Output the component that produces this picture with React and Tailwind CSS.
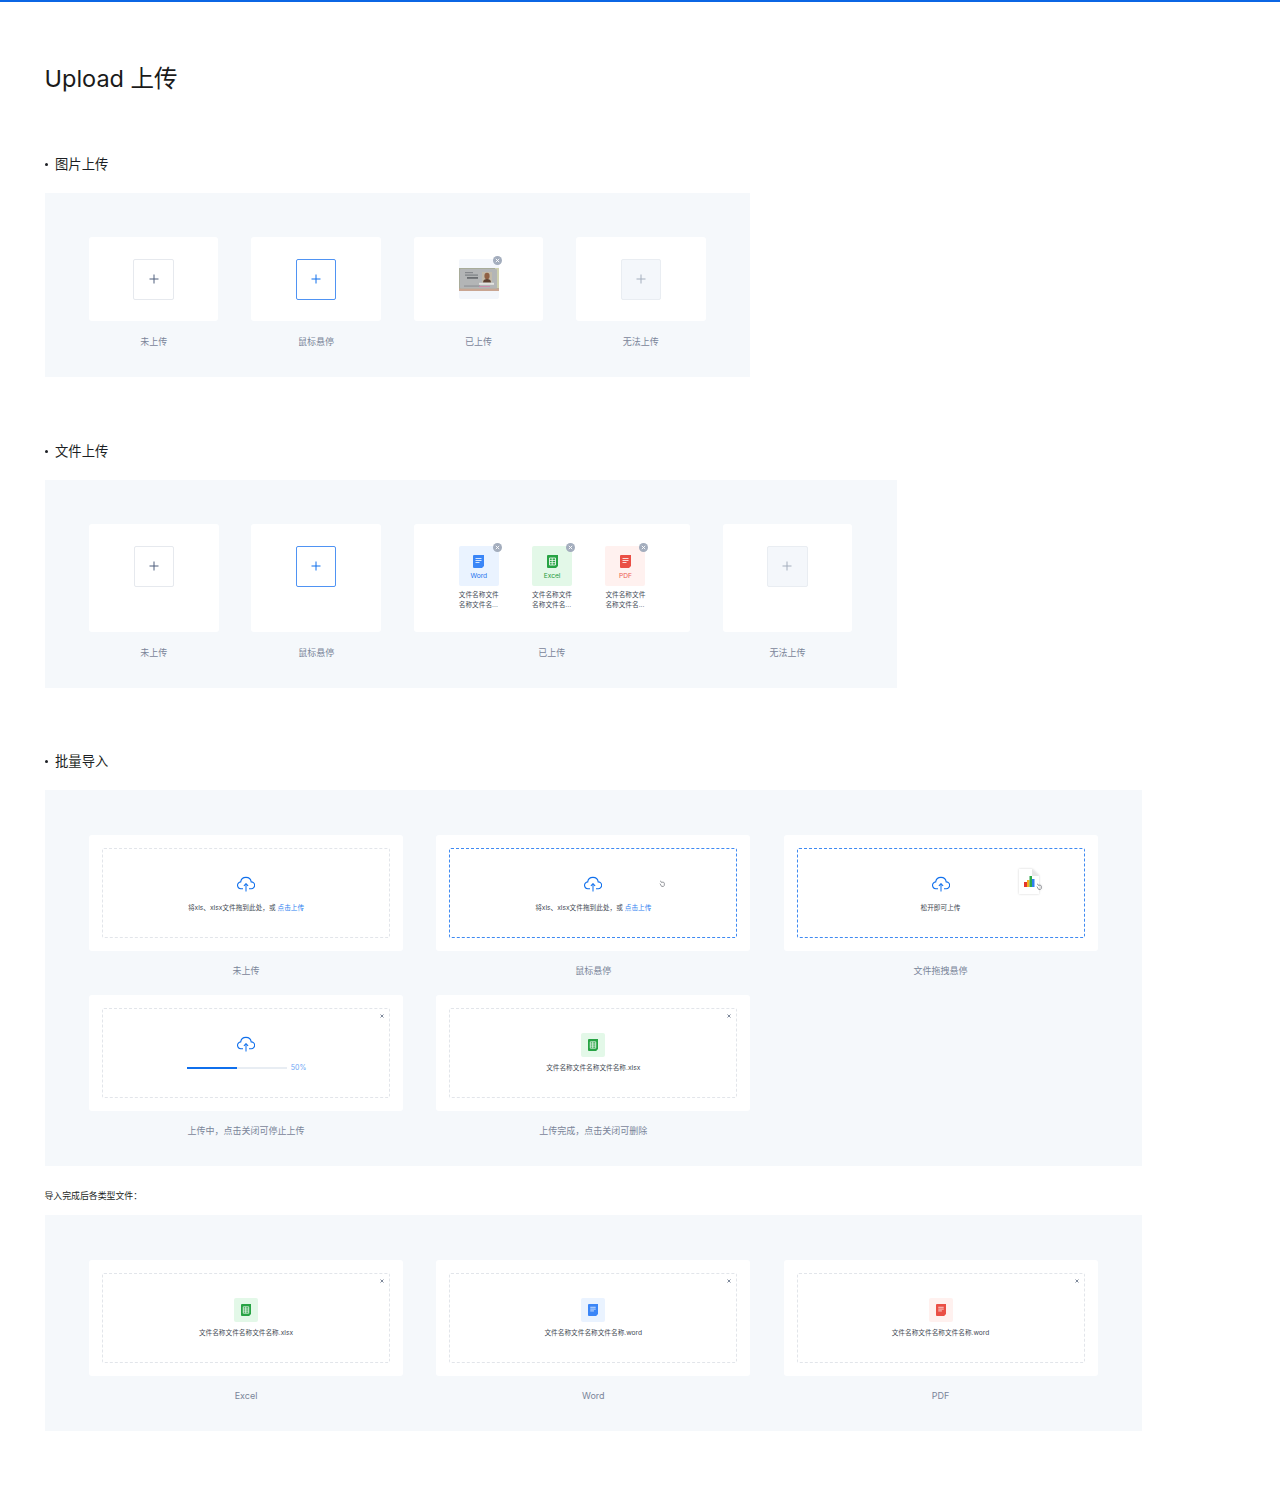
import React from "react";

const tone = {
  word: { tile: "bg-[#eaf3ff]", text: "text-[#1f74ee]", fill: "#3b86f7", name: "Word" },
  excel: { tile: "bg-[#e3f8e8]", text: "text-[#1f9a3c]", fill: "#27a344", name: "Excel" },
  pdf: { tile: "bg-[#fff1ef]", text: "text-[#ec5a50]", fill: "#ea4f45", name: "PDF" },
};

function Plus({ color = "#4f5f7d", size = 10 }) {
  return (
    <svg width={size} height={size} viewBox="0 0 10 10" fill="none" stroke={color} strokeWidth="1">
      <path d="M5 .5v9M.5 5h9" />
    </svg>
  );
}

function UploadTile({ state }) {
  const cls =
    state === "hover"
      ? "border-[#4f93f3] bg-white"
      : state === "disabled"
        ? "border-[#e9edf2] bg-[#f4f7fb]"
        : "border-[#e6e9ee] bg-white";
  const color = state === "hover" ? "#0f6fec" : state === "disabled" ? "#a4aebd" : "#4f5f7d";
  return (
    <div className={`flex h-[40.5px] w-[40.5px] items-center justify-center rounded-[2px] border ${cls}`}>
      <Plus color={color} />
    </div>
  );
}

function Remove() {
  return (
    <span className="absolute right-[-3px] top-[-3.5px] flex h-[9px] w-[9px] items-center justify-center rounded-full bg-[#a3adbd]">
      <svg width="5" height="5" viewBox="0 0 5 5" fill="none" stroke="#fff" strokeWidth="0.9">
        <path d="M.8.8l3.4 3.4M4.2.8L.8 4.2" />
      </svg>
    </span>
  );
}

function IdPhoto() {
  return (
    <svg width="40" height="40" viewBox="0 0 40 40" className="rounded-[2px]">
      <rect width="40" height="40" fill="#f3f6fb" />
      <rect y="9" width="40" height="23" fill="#a8ac9a" />
      <rect x="36" y="9" width="4" height="20" fill="#cfd0ae" />
      <rect y="29.5" width="40" height="2.5" fill="#c9a592" />
      <rect x="1" y="10" width="37" height="19.5" rx="1" fill="#b3b5b6" />
      <rect x="6" y="13" width="8" height="1.2" fill="#85888c" />
      <rect x="6" y="15.5" width="13" height="1.2" fill="#7d8084" />
      <rect x="8" y="18" width="11" height="1.8" fill="#6a6d71" />
      <rect x="5" y="26.6" width="16" height="0.9" fill="#85888c" />
      <rect x="20" y="27" width="11" height="0.9" fill="#cf8aab" />
      <rect x="23" y="13" width="10" height="10.5" fill="#c2bbaa" />
      <ellipse cx="28" cy="17" rx="2.6" ry="3.2" fill="#8f6043" />
      <path d="M24 23.5c0-2.6 2-3.5 4-3.5s4 .9 4 3.5z" fill="#5d4030" />
      <rect x="20" y="23.8" width="15" height="2" fill="#e3e3e0" />
    </svg>
  );
}

function DocGlyph({ type, w = 11, h = 13 }) {
  const c = tone[type].fill;
  return (
    <svg width={w} height={h} viewBox="0 0 11 13">
      <path d="M0 1a1 1 0 0 1 1-1h10v11l-2 2H1a1 1 0 0 1-1-1z" fill={c} />
      {type === "excel" ? (
        <path d="M2.5 3h6v7h-6zM2.5 5.4h6M2.5 7.7h6M5.2 3v7" fill="none" stroke="#fff" strokeWidth="0.8" />
      ) : (
        <path d="M2.5 3.5h6M2.5 5.5h6M2.5 7.5h4" fill="none" stroke="#fff" strokeWidth="0.8" />
      )}
    </svg>
  );
}

function FileItem({ type }) {
  const t = tone[type];
  return (
    <div className="w-[40px]">
      <div className={`relative flex h-[40px] w-[40px] flex-col items-center rounded-[2px] pt-[9px] ${t.tile}`}>
        <Remove />
        <DocGlyph type={type} />
        <span className={`mt-[3.5px] text-[6.67px] leading-[9px] ${t.text}`}>{t.name}</span>
      </div>
      <p className="mt-[5px] w-[44px] text-[6.67px] leading-[9.7px] text-[#444b57]">
        文件名称文件
        <br />
        名称文件名...
      </p>
    </div>
  );
}

function Label({ children, gap = "mt-[10px]" }) {
  return (
    <div className={`h-[20px] text-center text-[9px] leading-[20px] text-[#7a8599] ${gap}`}>
      {children}
    </div>
  );
}

function SmallLabel({ children }) {
  return <Label gap="mt-[10.75px]">{children}</Label>;
}

function TileCard({ state, label }) {
  return (
    <div className="w-[129.5px]">
      <div className="flex h-[84px] justify-center rounded-[3px] bg-white pt-[22px]">
        <UploadTile state={state} />
      </div>
      <SmallLabel>{label}</SmallLabel>
    </div>
  );
}

function Cloud() {
  return (
    <svg width="18" height="16" viewBox="0 0 18 16" fill="none">
      <path
        d="M6 12.7H4.2a3.4 3.4 0 0 1-.5-6.8 5.3 5.3 0 0 1 10.5 0 3.4 3.4 0 0 1 .1 6.8H12"
        stroke="#0f6fec"
        strokeWidth="1.1"
      />
      <path d="M9 15.5V7.8" stroke="#2f84f2" strokeWidth="1.2" />
      <path d="M6.9 9.9L9 7.7l2.1 2.2" stroke="#0f6fec" strokeWidth="1.1" />
    </svg>
  );
}

function Hand({ className }) {
  return (
    <svg className={className} width="6" height="7" viewBox="0 0 6 7" fill="none" stroke="#6b6f75" strokeWidth="0.7">
      <path d="M1 .8l1.4 1.2M2 2.2h2.6l.7 1v2.2l-.8 1H2.6L1 3.6" />
    </svg>
  );
}

function Close() {
  return (
    <svg className="absolute right-[5px] top-[4.5px]" width="4" height="4" viewBox="0 0 4 4" fill="none" stroke="#5d6b82" strokeWidth="0.8">
      <path d="M.5.5l3 3M3.5.5l-3 3" />
    </svg>
  );
}

function DragFile() {
  return (
    <div className="absolute left-[221px] top-[20px] h-[25px] w-[20px] drop-shadow-[0_0_1px_rgba(0,0,0,0.18)]">
      <svg width="20" height="25" viewBox="0 0 20 25">
        <path d="M0 0h13l7 7v18H0z" fill="#fff" />
        <path d="M13 0l7 7h-7z" fill="#e6e6e6" />
        <rect x="5" y="13" width="3" height="5" fill="#e5352b" />
        <rect x="8" y="11" width="2.5" height="7" fill="#f2b01e" />
        <rect x="10.5" y="7" width="2.5" height="11" fill="#2ca84a" />
        <rect x="13" y="10" width="2.5" height="8" fill="#2f7ff0" />
      </svg>
      <Hand className="absolute left-[17px] top-[14px]" />
    </div>
  );
}

function BatchCard({ label, active, children, closable }) {
  return (
    <div className="w-[314px]">
      <div className="h-[116px] rounded-[3px] bg-white p-[13px]">
        <div
          className={`relative flex h-[89.5px] flex-col items-center rounded-[2px] border border-dashed pt-[27px] ${active ? "border-[#3f8af2]" : "border-[#e2e5ea]"}`}
        >
          {closable && <Close />}
          {children}
        </div>
      </div>
      <Label>{label}</Label>
    </div>
  );
}

function Prompt({ children, className = "mt-[11.5px]" }) {
  return <p className={`whitespace-nowrap text-[6.67px] leading-[9px] text-[#444a54] ${className}`}>{children}</p>;
}

function Hint() {
  return (
    <Prompt>
      将xls、xlsx文件拖到此处，或 <span className="text-[#2f7ff0]">点击上传</span>
    </Prompt>
  );
}

function FileDone({ type, name }) {
  return (
    <>
      <div className={`-mt-[3px] flex h-[24px] w-[24px] items-center justify-center rounded-[2px] ${tone[type].tile}`}>
        <DocGlyph type={type} w={10} h={12} />
      </div>
      <Prompt className="mt-[6.5px]">{name}</Prompt>
    </>
  );
}

function Heading({ children }) {
  return (
    <h2 className="flex h-[20px] items-center text-[13.33px] font-normal leading-[20px] text-[#1c1f24]">
      <span className="ml-[0.5px] mr-[7px] h-[3px] w-[3px] rounded-full bg-[#1c1f24]" />
      {children}
    </h2>
  );
}

export default function App() {
  return (
    <div className="min-h-[1498px] bg-white font-[Inter,'Noto_Sans_CJK_SC',sans-serif]">
      <div className="h-[2px] bg-[#0b66e4]" />
      <div className="pl-[44.5px]">
        <h1 className="mt-[61px] h-[32px] text-[23.5px] font-normal leading-[32px] text-[#1a1a1a]">Upload 上传</h1>

        <div className="mt-[59px]">
          <Heading>图片上传</Heading>
          <section className="mt-[19px] flex h-[184px] w-[705.5px] gap-[33px] bg-[#f5f8fb] px-[44.5px] pt-[44px]">
            <TileCard label="未上传" />
            <TileCard label="鼠标悬停" state="hover" />
            <div className="w-[129.5px]">
              <div className="flex h-[84px] justify-center rounded-[3px] bg-white pl-[0.5px] pt-[22px]">
                <div className="relative h-[40px] w-[40px]">
                  <IdPhoto />
                  <Remove />
                </div>
              </div>
              <SmallLabel>已上传</SmallLabel>
            </div>
            <TileCard label="无法上传" state="disabled" />
          </section>
        </div>

        <div className="mt-[64px]">
          <Heading>文件上传</Heading>
          <section className="mt-[19px] flex h-[208px] w-[852.5px] gap-[32.9px] bg-[#f5f8fb] px-[44.5px] pt-[44px]">
            <div className="w-[129.5px]">
              <div className="flex h-[108px] justify-center rounded-[3px] bg-white pt-[22px]"><UploadTile /></div>
              <SmallLabel>未上传</SmallLabel>
            </div>
            <div className="w-[129.5px]">
              <div className="flex h-[108px] justify-center rounded-[3px] bg-white pt-[22px]"><UploadTile state="hover" /></div>
              <SmallLabel>鼠标悬停</SmallLabel>
            </div>
            <div className="w-[276px]">
              <div className="flex h-[108px] gap-[33.3px] rounded-[3px] bg-white pl-[45px] pt-[22px]">
                <FileItem type="word" />
                <FileItem type="excel" />
                <FileItem type="pdf" />
              </div>
              <SmallLabel>已上传</SmallLabel>
            </div>
            <div className="w-[129.5px]">
              <div className="flex h-[108px] justify-center rounded-[3px] bg-white pt-[22px]"><UploadTile state="disabled" /></div>
              <SmallLabel>无法上传</SmallLabel>
            </div>
          </section>
        </div>

        <div className="mt-[63px]">
          <Heading>批量导入</Heading>
          <section className="mt-[19px] w-[1097.5px] bg-[#f5f8fb] px-[44.5px] pb-[25px] pt-[45px]">
            <div className="grid grid-cols-[314px_314px_314px] gap-x-[33.25px] gap-y-[14px]">
              <BatchCard label="未上传">
                <Cloud />
                <Hint />
              </BatchCard>
              <BatchCard label="鼠标悬停" active>
                <Cloud />
                <Hint />
                <Hand className="absolute left-[209px] top-[31px]" />
              </BatchCard>
              <BatchCard label="文件拖拽悬停" active>
                <Cloud />
                <Prompt>松开即可上传</Prompt>
                <DragFile />
              </BatchCard>
              <BatchCard label="上传中，点击关闭可停止上传" closable>
                <Cloud />
                <div className="mt-[13px] flex h-[6px] items-center pl-[1px]">
                  <div className="h-[1.5px] w-[100px] bg-[#e8edf3]">
                    <div className="h-full w-1/2 bg-[#0f6fec]" />
                  </div>
                  <span className="ml-[4px] text-[7px] text-[#6ea6f5]">50%</span>
                </div>
              </BatchCard>
              <BatchCard label="上传完成，点击关闭可删除" closable>
                <FileDone type="excel" name="文件名称文件名称文件名称.xlsx" />
              </BatchCard>
            </div>
          </section>
        </div>

        <p className="mt-[20px] h-[20px] text-[8.9px] leading-[20px] text-[#1c1f24]">导入完成后各类型文件：</p>

        <section className="mt-[9px] w-[1097.5px] bg-[#f5f8fb] px-[44.5px] pb-[25px] pt-[45px]">
          <div className="grid grid-cols-[314px_314px_314px] gap-x-[33.25px]">
            <BatchCard label="Excel" closable>
              <FileDone type="excel" name="文件名称文件名称文件名称.xlsx" />
            </BatchCard>
            <BatchCard label="Word" closable>
              <FileDone type="word" name="文件名称文件名称文件名称.word" />
            </BatchCard>
            <BatchCard label="PDF" closable>
              <FileDone type="pdf" name="文件名称文件名称文件名称.word" />
            </BatchCard>
          </div>
        </section>
      </div>
    </div>
  );
}
